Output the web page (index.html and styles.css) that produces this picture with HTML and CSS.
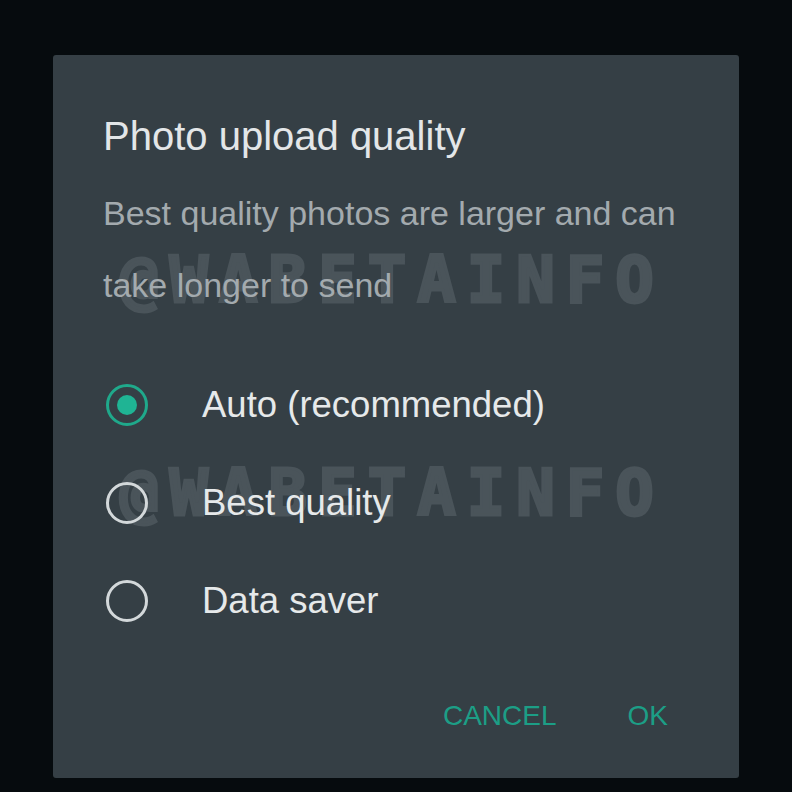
FILE: index.html
```html
<!DOCTYPE html>
<html lang="en">
<head>
<meta charset="utf-8">
<title>Photo upload quality</title>
<link rel="stylesheet" href="styles.css">
</head>
<body>
<div class="dialog">
  <div class="watermark wm1" aria-hidden="true">@WABETAINFO</div>
  <div class="watermark wm2" aria-hidden="true">@WABETAINFO</div>
  <div class="content">
    <h1 class="title">Photo upload quality</h1>
    <p class="subtitle">Best quality photos are larger and can take longer to send</p>
    <div class="options">
      <label class="option">
        <span class="radio selected"><span class="dot"></span></span>
        <span class="label">Auto (recommended)</span>
      </label>
      <label class="option">
        <span class="radio"></span>
        <span class="label">Best quality</span>
      </label>
      <label class="option">
        <span class="radio"></span>
        <span class="label">Data saver</span>
      </label>
    </div>
    <div class="actions">
      <span class="btn">CANCEL</span>
      <span class="btn">OK</span>
    </div>
  </div>
</div>
</body>
</html>
```

FILE: styles.css
```css
html, body {
  margin: 0;
  padding: 0;
}
body {
  background: #060b0e;
  width: 792px;
  height: 792px;
  overflow: hidden;
  font-family: "Liberation Sans", Arial, sans-serif;
}
.dialog {
  position: relative;
  box-sizing: border-box;
  margin: 55px 0 0 53px;
  width: 686px;
  height: 723px;
  background: #353f45;
  border-radius: 3px;
  padding: 57px 0 0 50px;
}
.content {
  position: relative;
  z-index: 1;
}
.watermark {
  position: absolute;
  z-index: 0;
  left: 67px;
  font-family: "DejaVu Sans Mono", monospace;
  font-weight: bold;
  font-size: 64px;
  line-height: 64px;
  letter-spacing: 11px;
  color: #4a545a;
  -webkit-text-stroke: 3px #4a545a;
  white-space: nowrap;
}
.wm1 { top: 193px; }
.wm2 { top: 406px; }
.title {
  margin: 0;
  font-weight: normal;
  font-size: 40px;
  line-height: 48px;
  color: #e3e6e8;
}
.subtitle {
  margin: 17px 0 0;
  width: 592px;
  font-size: 34px;
  line-height: 72px;
  color: #a3aaae;
}
.options {
  margin-top: 35px;
  display: flex;
  flex-direction: column;
}
.option {
  height: 98px;
  display: flex;
  align-items: center;
}
.radio {
  box-sizing: border-box;
  width: 42px;
  height: 42px;
  margin-left: 3px;
  border: 3px solid #d3d8da;
  border-radius: 50%;
  display: flex;
  align-items: center;
  justify-content: center;
  flex: none;
}
.radio.selected {
  border-color: #1fa98b;
}
.dot {
  width: 20px;
  height: 20px;
  border-radius: 50%;
  background: #1fb494;
}
.label {
  margin-left: 54px;
  font-size: 36.5px;
  color: #e6e9ea;
}
.actions {
  margin-top: 42px;
  padding-right: 71px;
  height: 48px;
  display: flex;
  justify-content: flex-end;
  align-items: center;
  gap: 71px;
}
.btn {
  font-size: 28px;
  color: #1c9e86;
}
```
